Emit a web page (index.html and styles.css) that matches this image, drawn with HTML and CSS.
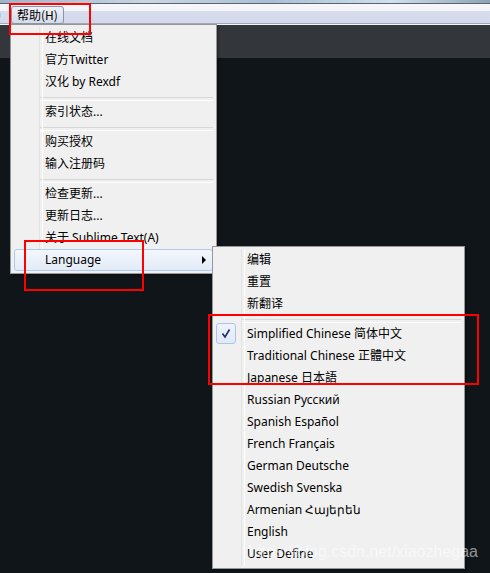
FILE: index.html
```html
<!DOCTYPE html>
<html>
<head>
<meta charset="utf-8">
<link rel="stylesheet" href="styles.css">
</head>
<body>
<div class="screen">
  <div class="titlebar"></div>
  <div class="menubar">
    <span class="prev">)</span>
    <span class="menu-btn">帮助(H)</span>
  </div>
  <div class="tabbar"></div>
  <div class="editor"></div>

  <div class="menu main-menu">
    <div class="item">在线文档</div>
    <div class="item">官方Twitter</div>
    <div class="item">汉化 by Rexdf</div>
    <div class="sep"></div>
    <div class="item">索引状态...</div>
    <div class="sep"></div>
    <div class="item">购买授权</div>
    <div class="item">输入注册码</div>
    <div class="sep"></div>
    <div class="item">检查更新...</div>
    <div class="item">更新日志...</div>
    <div class="item">关于 Sublime Text(A)</div>
    <div class="item hover">Language<span class="arrow"></span></div>
  </div>

  <div class="menu sub-menu">
    <div class="item">编辑</div>
    <div class="item">重置</div>
    <div class="item">新翻译</div>
    <div class="sep"></div>
    <div class="item checked">
      <span class="check"><svg width="20" height="21" viewBox="0 0 20 21"><path d="M6.5 10.5 L9 14 L13.5 6.5" fill="none" stroke="#1d2f72" stroke-width="1.6"/></svg></span>
      Simplified Chinese 简体中文</div>
    <div class="item">Traditional Chinese 正體中文</div>
    <div class="item">Japanese 日本語</div>
    <div class="item">Russian Русский</div>
    <div class="item">Spanish Español</div>
    <div class="item">French Français</div>
    <div class="item">German Deutsche</div>
    <div class="item">Swedish Svenska</div>
    <div class="item">Armenian Հայերեն</div>
    <div class="item">English</div>
    <div class="item">User Define</div>
  </div>

  <div class="mark mark-1"></div>
  <div class="mark mark-2"></div>
  <div class="mark mark-3"></div>

  <div class="watermark">https://blog.csdn.net/xiaozhegaa</div>
</div>
</body>
</html>
```

FILE: styles.css
```css
* { box-sizing: border-box; }
html, body { margin: 0; padding: 0; }
body {
  background: #0f1519;
  font-family: "Noto Sans", "Noto Sans CJK SC", sans-serif;
  font-size: 12px;
  color: #000;
}
.screen {
  position: relative;
  width: 490px;
  height: 573px;
  overflow: hidden;
  display: flex;
  flex-direction: column;
}
.titlebar {
  height: 4px;
  background: linear-gradient(90deg, #9fb3c8 0%, #c9d6e3 30%, #a9bfd4 55%, #cfe0ee 80%, #8ea2b4 100%);
  border-bottom: 1px solid #5d646d;
}
.menubar {
  height: 20px;
  display: flex;
  align-items: flex-end;
  background: linear-gradient(#f6f7fb 0%, #f2f4f8 35%, #d7dded 36%, #d3d9ea 100%);
  border-bottom: 1px solid #a3a8b8;
}
.prev {
  margin-left: -3px;
  width: 14px;
  line-height: 17px;
  align-self: center;
  font-family: "Noto Sans CJK SC", sans-serif;
}
.menu-btn {
  height: 18px;
  padding: 0 5px;
  line-height: 16px;
  margin-bottom: -1px;
  border: 1px solid #8a95a6;
  border-radius: 3px;
  background: linear-gradient(#eef1f7, #d4dbe9);
  font-family: "Noto Sans CJK SC", sans-serif;
  position: relative;
  z-index: 1;
}
.tabbar {
  height: 34px;
  background: #33373b;
  border-top: 1px solid #f4f6fa;
}
.editor {
  flex: 1;
  background: #0f1519;
}

.menu {
  position: absolute;
  background: #f0f0f0;
  border: 1px solid #979797;
  padding: 2px 3px;
  box-shadow: 2px 2px 2px rgba(0,0,0,0.25);
  z-index: 2;
}
.menu::before {
  content: "";
  position: absolute;
  top: 2px;
  bottom: 2px;
  left: 28px;
  width: 2px;
  border-left: 1px solid #e2e3e3;
  border-right: 1px solid #ffffff;
}
.main-menu {
  left: 10px;
  top: 24px;
  width: 207px;
  height: 250px;
}
.sub-menu {
  left: 212px;
  top: 246px;
  width: 253px;
  height: 323px;
  z-index: 3;
}
.item {
  position: relative;
  height: 22px;
  line-height: 22px;
  padding-left: 31px;
  white-space: nowrap;
}
.item.hover {
  border: 1px solid #aecbee;
  border-radius: 3px;
  background: linear-gradient(#f3f7fd, #e2ebf7);
  padding-left: 30px;
  line-height: 20px;
}
.arrow {
  position: absolute;
  right: 6px;
  top: 6px;
  width: 0;
  height: 0;
  border-top: 4px solid transparent;
  border-bottom: 4px solid transparent;
  border-left: 4px solid #000;
}
.sep {
  height: 8px;
  margin-left: 26px;
  padding-top: 4px;
}
.sep::before {
  content: "";
  display: block;
  height: 2px;
  border-top: 1px solid #d7d7d7;
  border-bottom: 1px solid #ffffff;
}
.check {
  position: absolute;
  left: 0;
  top: 0;
  width: 20px;
  height: 21px;
  border: 1px solid #a9c6ea;
  border-radius: 3px;
  background: linear-gradient(#eef3fb, #e1e9f6);
}
.check svg {
  position: absolute;
  left: -1px;
  top: -1px;
}

.mark {
  position: absolute;
  border: 2px solid #f00;
  z-index: 5;
}
.mark-1 { left: 9px; top: 3px; width: 82px; height: 32px; }
.mark-2 { left: 24px; top: 240px; width: 120px; height: 51px; }
.mark-3 { left: 208px; top: 314px; width: 271px; height: 71px; }

.watermark {
  position: absolute;
  right: 12px;
  top: 543px;
  font-family: "Liberation Sans", Arial, sans-serif;
  font-size: 16px;
  color: rgba(255,255,255,0.55);
  z-index: 6;
  white-space: nowrap;
}
```
